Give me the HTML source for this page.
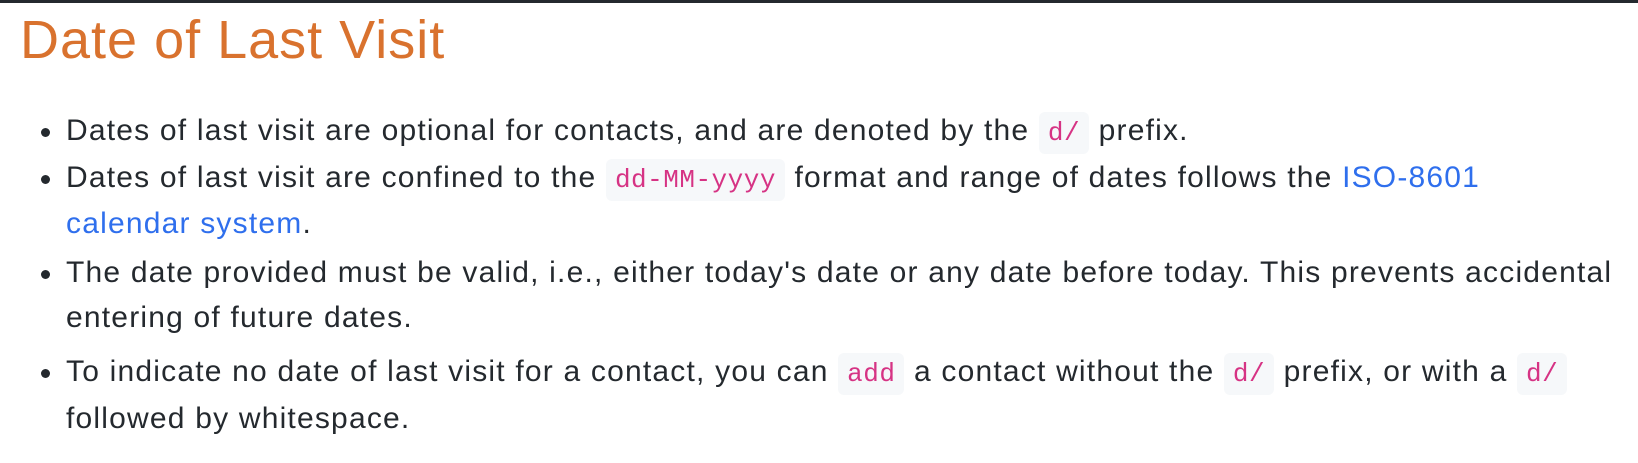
<!DOCTYPE html>
<html><head><meta charset="utf-8"><style>
html,body{margin:0;padding:0;background:#fff;width:1638px;height:460px;overflow:hidden}
body{border-top:3px solid #24292e;font-family:"Liberation Sans",Arial,sans-serif;color:#24292e}
h1{margin:0;position:absolute;left:20px;top:8px;font-size:54px;font-weight:400;color:#d9722e;line-height:64px;letter-spacing:1px}
ul{position:absolute;left:0;top:109px;margin:0;padding-left:66px;font-size:30px;letter-spacing:1.2px;line-height:44.5px;white-space:nowrap;list-style:none}
li{position:relative}
li.c{margin-top:4.5px}
li.d{margin-top:10px}
li:before{content:"";position:absolute;left:-25px;top:19px;width:9px;height:9px;border-radius:50%;background:#24292e}
code{font-family:"Liberation Mono","DejaVu Sans Mono",monospace;font-size:26px;letter-spacing:0.5px;color:#d63384;background:#f6f8fa;border-radius:6px;padding:6px 9px}
a{color:#2f6fed;text-decoration:none}
</style></head><body>
<h1>Date of Last Visit</h1>
<ul>
<li>Dates of last visit are optional for contacts, and are denoted by the <code>d/</code> prefix.</li>
<li>Dates of last visit are confined to the <code>dd-MM-yyyy</code> format and range of dates follows the <a>ISO-8601</a><br><a>calendar system</a>.</li>
<li class="c">The date provided must be valid, i.e., either today's date or any date before today. This prevents accidental<br>entering of future dates.</li>
<li class="d">To indicate no date of last visit for a contact, you can <code>add</code> a contact without the <code>d/</code> prefix, or with a <code>d/</code><br>followed by whitespace.</li>
</ul>
</body></html>
